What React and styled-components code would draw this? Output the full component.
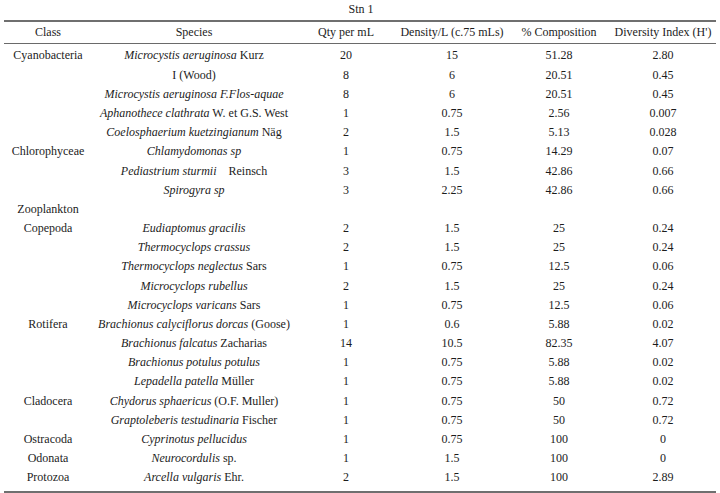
import React from 'react';
import styled, { createGlobalStyle } from 'styled-components';

const GlobalStyle = createGlobalStyle`
  html, body {
    margin: 0;
    padding: 0;
    background: #ffffff;
  }
  body {
    font-family: "Liberation Serif", "Times New Roman", serif;
    color: #1c1c1c;
  }
`;

const COLS = '88px 204px 100px 112px 102px 106px';

const Wrapper = styled.div`
  width: 712px;
  margin: 0 4px;
  font-size: 12px;
`;

const Caption = styled.div`
  height: 20px;
  line-height: 18px;
  text-align: center;
  padding-left: 2px;
  border-bottom: 2px solid #6f6f6f;
`;

const HeadRow = styled.div`
  display: grid;
  grid-template-columns: ${COLS};
  height: 21px;
  align-items: center;
  border-bottom: 1px solid #6a6a6a;
`;

const Body = styled.div`
  padding: 2.4px 0 4px;
  border-bottom: 2px solid #6f6f6f;
`;

const Row = styled.div`
  display: grid;
  grid-template-columns: ${COLS};
  height: 19.18px;
  align-items: center;
`;

const Cell = styled.div`
  text-align: center;
  white-space: pre;
  ${(p) => p.$shift && `transform: translateX(${p.$shift}px);`}
`;

const Sp = styled.span`
  font-style: italic;
`;

const rows = [
  ['Cyanobacteria', <><Sp>Microcystis aeruginosa</Sp> Kurz</>, '20', '15', '51.28', '2.80'],
  ['', 'I (Wood)', '8', '6', '20.51', '0.45'],
  ['', <Sp>Microcystis aeruginosa F.Flos-aquae</Sp>, '8', '6', '20.51', '0.45'],
  ['', <><Sp>Aphanothece clathrata</Sp> W. et G.S. West</>, '1', '0.75', '2.56', '0.007'],
  ['', <><Sp>Coelosphaerium kuetzingianum</Sp> Näg</>, '2', '1.5', '5.13', '0.028'],
  ['Chlorophyceae', <Sp>Chlamydomonas sp</Sp>, '1', '0.75', '14.29', '0.07'],
  ['', <><Sp>Pediastrium sturmii</Sp>    Reinsch</>, '3', '1.5', '42.86', '0.66'],
  ['', <Sp>Spirogyra sp</Sp>, '3', '2.25', '42.86', '0.66'],
  ['Zooplankton', '', '', '', '', ''],
  ['Copepoda', <Sp>Eudiaptomus gracilis</Sp>, '2', '1.5', '25', '0.24'],
  ['', <Sp>Thermocyclops crassus</Sp>, '2', '1.5', '25', '0.24'],
  ['', <><Sp>Thermocyclops neglectus</Sp> Sars</>, '1', '0.75', '12.5', '0.06'],
  ['', <Sp>Microcyclops rubellus</Sp>, '2', '1.5', '25', '0.24'],
  ['', <><Sp>Microcyclops varicans</Sp> Sars</>, '1', '0.75', '12.5', '0.06'],
  ['Rotifera', <><Sp>Brachionus calyciflorus dorcas</Sp> (Goose)</>, '1', '0.6', '5.88', '0.02'],
  ['', <><Sp>Brachionus falcatus</Sp> Zacharias</>, '14', '10.5', '82.35', '4.07'],
  ['', <Sp>Brachionus potulus potulus</Sp>, '1', '0.75', '5.88', '0.02'],
  ['', <><Sp>Lepadella patella</Sp> Müller</>, '1', '0.75', '5.88', '0.02'],
  ['Cladocera', <><Sp>Chydorus sphaericus</Sp> (O.F. Muller)</>, '1', '0.75', '50', '0.72'],
  ['', <><Sp>Graptoleberis testudinaria</Sp> Fischer</>, '1', '0.75', '50', '0.72'],
  ['Ostracoda', <Sp>Cyprinotus pellucidus</Sp>, '1', '0.75', '100', '0'],
  ['Odonata', <><Sp>Neurocordulis</Sp> sp.</>, '1', '1.5', '100', '0'],
  ['Protozoa', <><Sp>Arcella vulgaris</Sp> Ehr.</>, '2', '1.5', '100', '2.89'],
];

const headers = ['Class', 'Species', 'Qty per mL', 'Density/L (c.75 mLs)', '% Composition', 'Diversity Index (H\')'];

export default function App() {
  return (
    <>
      <GlobalStyle />
      <Wrapper>
        <Caption>Stn 1</Caption>
        <HeadRow>
          {headers.map((h) => (
            <Cell key={h}>{h}</Cell>
          ))}
        </HeadRow>
        <Body>
          {rows.map((r, i) => (
            <Row key={i}>
              {r.map((c, j) => (
                <Cell key={j}>{c}</Cell>
              ))}
            </Row>
          ))}
        </Body>
      </Wrapper>
    </>
  );
}
